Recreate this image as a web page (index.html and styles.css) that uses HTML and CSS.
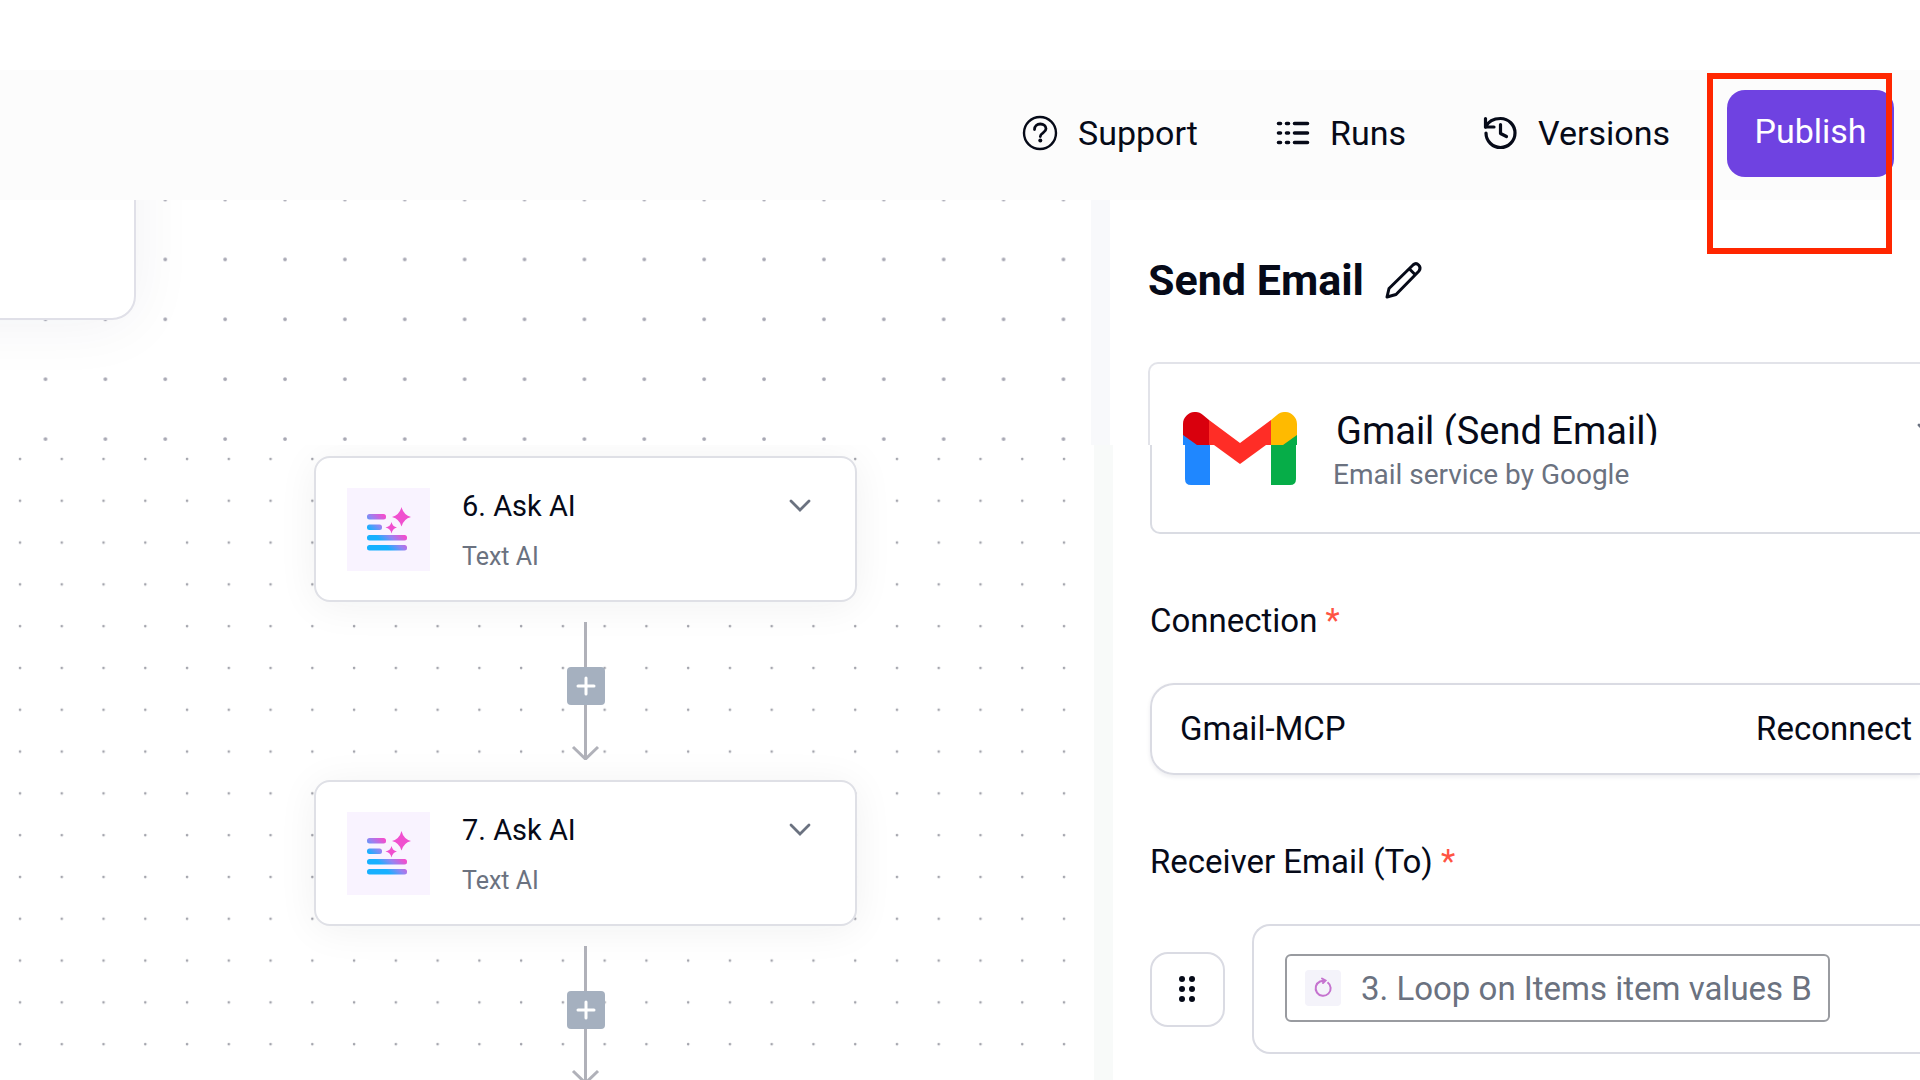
FILE: index.html
```html
<!DOCTYPE html>
<html lang="en">
<head>
  <meta charset="UTF-8">
  <title>Send Email</title>
  <link rel="stylesheet" href="styles.css">
</head>
<body>

  <!-- shared icons -->
  <svg class="defs" width="0" height="0" aria-hidden="true">
    <defs>
      <linearGradient id="ai-gradient" gradientUnits="userSpaceOnUse" x1="31" y1="50" x2="45" y2="36">
        <stop offset="0" stop-color="#17b0ff"/>
        <stop offset="0.5" stop-color="#9484f2"/>
        <stop offset="1" stop-color="#f04fcf"/>
      </linearGradient>
      <symbol id="icon-ai" viewBox="0 0 83 83">
        <g fill="url(#ai-gradient)">
          <rect x="20" y="26" width="19" height="5.500" rx="2.500"/>
          <rect x="20" y="36.500" width="15" height="5.500" rx="2.500"/>
          <rect x="20" y="47" width="40" height="5.500" rx="2.500"/>
          <rect x="20" y="57" width="40" height="5.500" rx="2.500"/>
        </g>
        <path fill="#f04fcf" d="M54.500 19Q56.500 27 64 29Q56.500 31 54.500 38.500Q52.500 31 45 29Q52.500 27 54.500 19z"/>
        <path fill="#f04fcf" d="M44.500 34Q45.500 38.500 50 39.500Q45.500 40.500 44.500 45.500Q43.500 40.500 38.500 39.500Q43.500 38.500 44.500 34z"/>
      </symbol>
      <symbol id="icon-chevron" viewBox="0 0 24 24">
        <path d="M3 7l9 9 9-9" fill="none" stroke="currentColor" stroke-width="2.800" stroke-linecap="round"/>
      </symbol>
      <symbol id="icon-connector" viewBox="0 0 38 138">
        <path d="M18.500 0v137M6 125l12.500 12L31 125" fill="none" stroke="#b0b1b9" stroke-width="3"/>
      </symbol>
      <symbol id="icon-plus" viewBox="0 0 38 38">
        <path d="M19 11v16M11 19h16" stroke="#fff" stroke-width="3" stroke-linecap="round"/>
      </symbol>
      <pattern id="dots-large" width="59.880" height="59.880" x="15.500" y="-30.500" patternUnits="userSpaceOnUse">
        <circle cx="30" cy="30" r="1.900" fill="#a7a7b3"/>
      </pattern>
      <pattern id="dots-small" width="41.760" height="41.800" x="0" y="-6" patternUnits="userSpaceOnUse">
        <circle cx="20" cy="20" r="1.300" fill="#a3a4ac"/>
      </pattern>
    </defs>
  </svg>

  <header class="topbar">
    <nav class="menu">
      <a href="#support">
        <svg width="36" height="36" viewBox="0 0 36 36" fill="none" stroke="currentColor">
          <circle cx="18" cy="18" r="16" stroke-width="2.400"/>
          <path d="M12.500 14.500c0-3.500 2.500-5.500 5.800-5.500s5.700 2 5.700 4.800c0 4-5.700 4-5.700 7.700" stroke-width="2.800" stroke-linecap="round"/>
          <circle cx="18.300" cy="25.600" r="2" fill="currentColor" stroke="none"/>
        </svg>
        Support
      </a>
      <a href="#runs">
        <svg width="36" height="36" viewBox="0 0 36 36" stroke="currentColor" stroke-width="3.600" stroke-linecap="round">
          <path d="M4.500 8.500h2M12.500 8.500h2M20.500 8.500h13M4.500 18h2M12.500 18h2M20.500 18h13M4.500 27.500h2M12.500 27.500h2M20.500 27.500h13"/>
        </svg>
        Runs
      </a>
      <a href="#versions">
        <svg width="36" height="36" viewBox="0 0 36 36" fill="none" stroke="currentColor" stroke-width="3.200" stroke-linecap="round" stroke-linejoin="round">
          <path d="M3.500 3.500v8.500h8.500"/>
          <path d="M3.500 12C6.500 6 12 3.500 18.500 3.500a14.500 14.500 0 1 1-14.500 14.500"/>
          <path d="M18.500 9.500v9l6 3"/>
        </svg>
        Versions
      </a>
    </nav>
    <button class="publish" type="button">Publish</button>
    <div class="highlight"></div>
  </header>

  <section class="split">
    <div class="canvas">
      <svg class="dots" aria-hidden="true"><rect width="100%" height="100%" fill="url(#dots-large)"/></svg>
      <div class="node-corner"></div>
    </div>
    <div class="gutter"></div>
    <div class="panel">
      <div class="panel-title">
        <h1>Send Email</h1>
        <button class="plain" type="button" aria-label="Rename step">
          <svg width="40" height="40" viewBox="0 0 40 40" fill="none" stroke="currentColor" stroke-width="3" stroke-linejoin="round">
            <path d="M3 37l2-8.500L29 5c4-3.500 9 1.500 6 6L12 34.500z"/>
            <path d="M25.500 9l6 6"/>
          </svg>
        </button>
      </div>
      <div class="app-card">
        <svg class="gmail" width="114" height="33" viewBox="0 0 114 33">
          <path fill="#1f87ff" d="M0 22v11h16z"/>
          <path fill="#06ad48" d="M114 22v11H98z"/>
          <path fill="#ff2d26" d="M26 8l31 23L88 8v25H26z"/>
          <path fill="#d9000d" d="M0 12C0 2 12-4 20 3l6 5v25H14L0 23z"/>
          <path fill="#ffba00" d="M114 12c0-10-12-16-20-9l-6 5v25h12l14-10z"/>
        </svg>
        <div class="app-name">Gmail (Send Email)</div>
        <svg class="app-toggle" width="24" height="24"><use href="#icon-chevron"/></svg>
      </div>
    </div>
  </section>

  <section class="split main">
    <div class="canvas">
      <svg class="dots" aria-hidden="true"><rect width="100%" height="100%" fill="url(#dots-small)"/></svg>
      <div class="flow">
        <div class="node">
          <svg class="node-icon" width="83" height="83"><use href="#icon-ai"/></svg>
          <div class="node-text">
            <div class="node-name">6. Ask AI</div>
            <div class="node-type">Text AI</div>
          </div>
          <button class="plain" type="button" aria-label="Step menu">
            <svg width="24" height="24"><use href="#icon-chevron"/></svg>
          </button>
        </div>
        <div class="connector">
          <svg width="38" height="138"><use href="#icon-connector"/></svg>
          <button class="add" type="button" aria-label="Add step">
            <svg width="38" height="38"><use href="#icon-plus"/></svg>
          </button>
        </div>
        <div class="node">
          <svg class="node-icon" width="83" height="83"><use href="#icon-ai"/></svg>
          <div class="node-text">
            <div class="node-name">7. Ask AI</div>
            <div class="node-type">Text AI</div>
          </div>
          <button class="plain" type="button" aria-label="Step menu">
            <svg width="24" height="24"><use href="#icon-chevron"/></svg>
          </button>
        </div>
        <div class="connector">
          <svg width="38" height="138"><use href="#icon-connector"/></svg>
          <button class="add" type="button" aria-label="Add step">
            <svg width="38" height="38"><use href="#icon-plus"/></svg>
          </button>
        </div>
      </div>
    </div>
    <div class="gutter"></div>
    <div class="panel">
      <div class="app-card bottom">
        <svg class="gmail" width="114" height="40" viewBox="0 0 114 40">
          <path fill="#ff2d26" d="M31 0h52L57 19z"/>
          <path fill="#1f87ff" d="M2 0h25v40H8q-6 0-6-6z"/>
          <path fill="#06ad48" d="M88 0h25v34q0 6-6 6H88z"/>
        </svg>
        <div class="app-desc">Email service by Google</div>
      </div>

      <label for="connection">Connection <span class="required">*</span></label>
      <div class="connection-box">
        <input type="text" id="connection" value="Gmail-MCP" readonly>
        <button class="plain" type="button">Reconnect</button>
      </div>

      <label id="receiver-label">Receiver Email (To) <span class="required">*</span></label>
      <div class="receiver">
        <button class="drag" type="button" aria-label="Move item">
          <svg width="19" height="28" viewBox="0 0 19 28" fill="currentColor">
            <circle cx="4" cy="4" r="3"/><circle cx="14" cy="4" r="3"/>
            <circle cx="4" cy="14" r="3"/><circle cx="14" cy="14" r="3"/>
            <circle cx="4" cy="24" r="3"/><circle cx="14" cy="24" r="3"/>
          </svg>
        </button>
        <div class="receiver-input" role="textbox" aria-labelledby="receiver-label">
          <span class="chip">
            <svg class="chip-icon" width="36" height="36" viewBox="0 0 36 36" fill="none" stroke="#c573cf" stroke-width="2">
              <path d="M22.500 12.200A7.500 7.500 0 1 1 15 11.500l4.500-1"/>
              <path d="M17 8.500l3.500 2-2.500 2.500" stroke-linecap="round"/>
            </svg>
            3. Loop on Items item values B
          </span>
        </div>
      </div>
    </div>
  </section>

</body>
</html>
```
FILE: styles.css
```css
* {
  box-sizing: border-box;
}
body {
  margin: 0;
  padding-top: 70px;
  height: 100vh;
  display: flex;
  flex-direction: column;
  overflow: hidden;
  background: #fff;
  color: #060a18;
  font-family: Roboto, "Liberation Sans", sans-serif;
}
button, input {
  font: inherit;
  color: inherit;
}
svg {
  display: block;
  flex: none;
}
.defs {
  position: absolute;
}
.plain {
  background: none;
  border: none;
  padding: 0;
  cursor: pointer;
}

/* top bar */
.topbar {
  position: relative;
  z-index: 2;
  display: flex;
  justify-content: flex-end;
  align-items: center;
  gap: 57px;
  height: 130px;
  padding: 0 26px 4px 0;
  background: #fcfcfc;
  font-size: 34px;
  flex: none;
}
.menu {
  display: flex;
  gap: 76px;
}
.menu a {
  display: flex;
  align-items: center;
  gap: 20px;
  color: inherit;
  text-decoration: none;
}
.publish {
  width: 167px;
  height: 87px;
  padding: 0 0 4px;
  border: none;
  border-radius: 18px;
  background: #6f42e1;
  color: #fff;
  cursor: pointer;
}
.highlight {
  position: absolute;
  top: 3px;
  right: 28px;
  width: 185px;
  height: 181px;
  border: 6px solid #ff2600;
  pointer-events: none;
}

/* canvas on the left, settings on the right */
.split {
  display: flex;
  height: 245px;
  flex: none;
  overflow: hidden;
}
.split.main {
  height: auto;
  flex: 1;
}
.canvas {
  position: relative;
  flex: 1;
  overflow: hidden;
}
.dots {
  position: absolute;
  width: 100%;
  height: 100%;
}
.gutter {
  width: 19px;
  background: #f8f9fb;
}
.main .gutter {
  background: #f8faf9;
}
.panel {
  width: 810px;
  padding: 54px 0 0 38px;
}
.main .panel {
  width: 807px;
  padding: 0 0 0 37px;
}

/* flow nodes */
.node-corner {
  position: absolute;
  top: -80px;
  left: -80px;
  width: 216px;
  height: 200px;
  border: 2px solid #e0e0e8;
  border-radius: 24px;
  background: #fff;
  box-shadow: 0 4px 64px rgba(20, 30, 60, 0.06);
}
.flow {
  position: absolute;
  top: 11px;
  left: 314px;
  width: 543px;
}
.node {
  display: flex;
  align-items: flex-start;
  height: 146px;
  padding: 30px 43px 0 31px;
  border: 2px solid #dfe0e6;
  border-radius: 16px;
  background: #fff;
  box-shadow: 0 4px 40px rgba(20, 40, 40, 0.06);
}
.node-icon {
  background: #f9f3ff;
}
.node-text {
  flex: 1;
  padding-left: 32px;
}
.node-name {
  font-size: 29px;
  line-height: 36px;
}
.node-type {
  margin-top: 16px;
  font-size: 25px;
  line-height: 34px;
  color: #6b7280;
}
.node .plain {
  padding-top: 6px;
  color: #6b7280;
}
.connector {
  position: relative;
  width: 38px;
  margin: 20px auto;
}
.add {
  position: absolute;
  top: 45px;
  left: 0;
  padding: 0;
  border: none;
  border-radius: 4px;
  background: #a5b0bf;
  cursor: pointer;
}

/* settings panel */
.panel-title {
  display: flex;
  align-items: center;
  gap: 20px;
}
h1 {
  margin: 0;
  font-size: 43px;
  line-height: 52px;
}
.app-card {
  display: flex;
  align-items: flex-start;
  height: 100px;
  margin-top: 56px;
  padding: 44px 0 0 33px;
  border: 2px solid #e2e3e9;
  border-right: none;
  border-radius: 10px 0 0 0;
}
.app-card .gmail {
  margin-top: 4px;
}
.app-name {
  flex: 1;
  padding-left: 39px;
  font-size: 38px;
  line-height: 46px;
}
.app-toggle {
  margin: 10px -20px 0 0;
  color: #6b7280;
}
.app-card.bottom {
  height: 89px;
  margin: 0 0 67px;
  padding: 0 0 0 31px;
  border: 2px solid #dadce3;
  border-top: none;
  border-right: none;
  border-radius: 0 0 0 10px;
}
.bottom .gmail {
  margin-top: 0;
}
.app-desc {
  padding: 14px 0 0 36px;
  font-size: 28px;
  line-height: 32px;
  color: #6b7280;
}
label {
  display: block;
  margin-bottom: 42px;
  font-size: 33px;
  line-height: 40px;
}
.required {
  color: #ff5443;
}
.connection-box {
  display: flex;
  align-items: center;
  height: 92px;
  margin-bottom: 67px;
  padding: 0 8px 2px 28px;
  border: 2px solid #dadbe3;
  border-right: none;
  border-radius: 24px 0 0 24px;
  box-shadow: 0 2px 4px rgba(20, 30, 60, 0.08);
  font-size: 33px;
}
.connection-box input {
  flex: 1;
  min-width: 0;
  padding: 0;
  border: none;
  background: none;
  outline: none;
}
.receiver {
  display: flex;
  align-items: center;
  gap: 27px;
}
.drag {
  display: flex;
  align-items: center;
  justify-content: center;
  width: 75px;
  height: 75px;
  padding: 0;
  border: 2px solid #dadbe3;
  border-radius: 18px;
  background: #fff;
}
.receiver-input {
  flex: 1;
  height: 130px;
  padding: 28px 0 0 31px;
  border: 2px solid #dadbe3;
  border-right: none;
  border-radius: 18px 0 0 18px;
}
.chip {
  display: inline-flex;
  align-items: center;
  gap: 20px;
  height: 68px;
  padding: 0 16px 0 18px;
  border: 2px solid #999ba0;
  border-radius: 6px;
  font-size: 33px;
  color: #6b7280;
  white-space: nowrap;
}
.chip-icon {
  border-radius: 4px;
  background: #f4f3fa;
}
```
